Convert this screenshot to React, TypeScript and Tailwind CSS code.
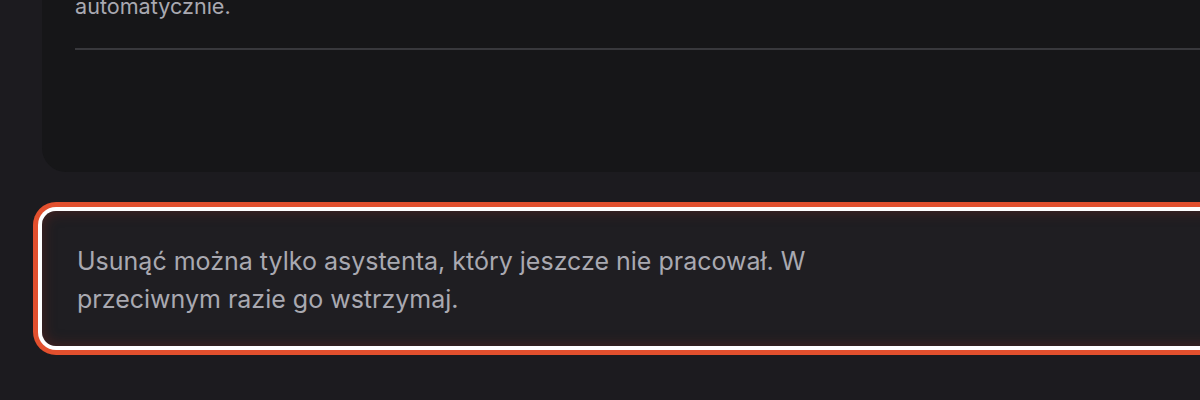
export default function App() {
  return (
    <div
      className="h-[400px] w-[1200px] overflow-hidden bg-[#1c1b1f]"
      style={{ fontFamily: 'Inter, "Noto Sans", sans-serif' }}
    >
      <div className="w-[1300px] pl-[42px]">
        <div className="-mt-[40px] rounded-b-[24px] bg-[#161618] px-[33px] pt-[27px] pb-[122px]">
          <p className="text-[21.6px] leading-[38px] text-[#a9a9b1]">automatycznie.</p>
          <div className="mt-[23px] h-[2px] bg-[#38383c]" />
        </div>
        <div className="mt-[39px] rounded-[14px] bg-[#1f1e22] px-[35px] pt-[31px] pb-[28px] shadow-[0_0_0_4px_#ffffff,0_0_0_9px_#e2502e,inset_0_0_14px_rgba(120,40,30,0.5)]">
          <p className="w-[780px] text-[25px] leading-[38px] text-[#a9a9b1]">
            Usunąć można tylko asystenta, który jeszcze nie pracował. W przeciwnym razie go wstrzymaj.
          </p>
        </div>
      </div>
    </div>
  );
}
